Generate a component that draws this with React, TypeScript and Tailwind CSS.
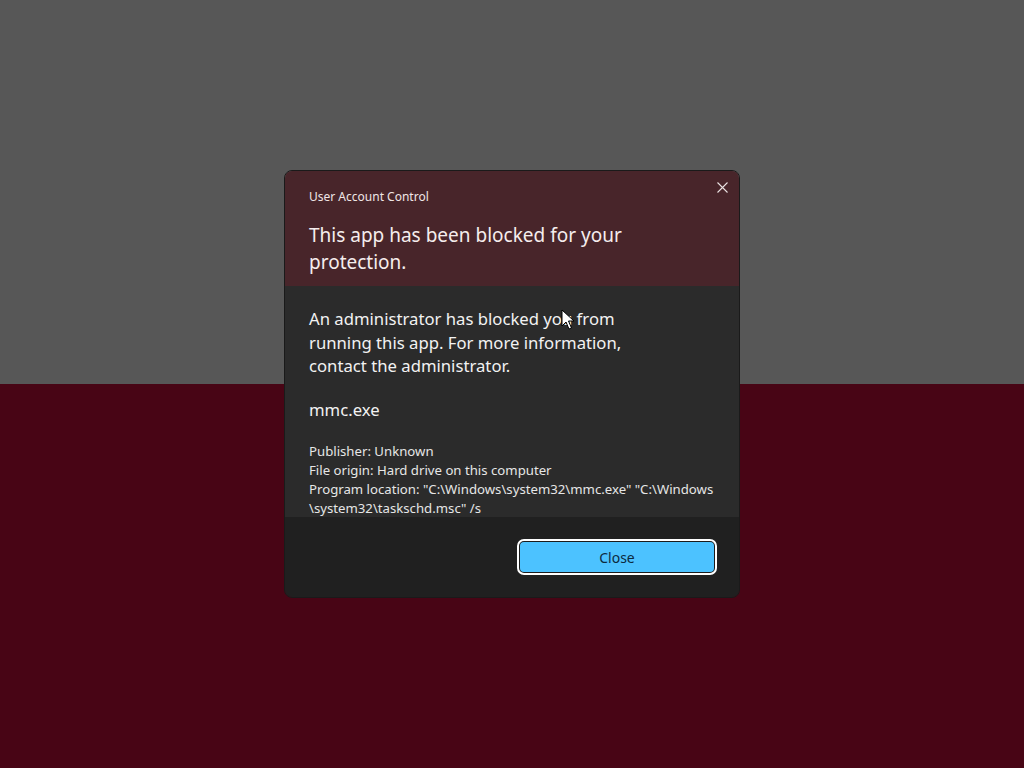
import React from 'react';

function Cursor() {
  return (
    <svg width="14" height="21" viewBox="0 0 14 21" className="absolute left-[561px] top-[309px]">
      <path d="M1 1 L1 17 L5 13 L8 20 L10.5 19 L7.5 12 L13 12 Z" fill="#ffffff" stroke="#000000" strokeWidth="1" strokeLinejoin="round" />
    </svg>
  );
}

export default function App() {
  return (
    <div className="relative w-[1024px] h-[768px] overflow-hidden font-['Noto_Sans',sans-serif]">
      {/* Backdrop halves */}
      <div className="flex flex-col h-full">
        <div className="h-[384px] bg-[#575757]" />
        <div className="flex-1 bg-[#480515]" />
      </div>

      {/* Dialog */}
      <div className="absolute inset-0 flex items-center justify-center">
        <div className="w-[456px] h-[428px] flex flex-col rounded-[8px] border border-[#1a1a1a] overflow-hidden">
          {/* Header */}
          <div className="relative bg-[#48252a] px-6 pt-[17px] pb-[10px]">
            <div className="text-[12px] leading-[18px] text-[#f0e6e6]">User Account Control</div>
            <div className="mt-[16px] text-[19px] leading-[27px] text-[#f5eded]">
              This app has been blocked for your
              <br />
              protection.
            </div>
            <button className="absolute right-[11px] top-[10px] w-[12px] h-[12px] flex items-center justify-center text-[#e8e0e0]">
              <svg width="11" height="11" viewBox="0 0 11 11">
                <path d="M0.5 0.5 L10.5 10.5 M10.5 0.5 L0.5 10.5" stroke="currentColor" strokeWidth="1.1" />
              </svg>
            </button>
          </div>

          {/* Body */}
          <div className="flex-1 bg-[#2b2b2b] px-6 pt-[21px] overflow-hidden">
            <p className="text-[16.7px] leading-[23.5px] text-[#f2f2f2]">
              An administrator has blocked you from
              <br />
              running this app. For more information,
              <br />
              contact the administrator.
            </p>
            <div className="mt-[20px] text-[16.7px] leading-[24px] text-[#f2f2f2]">mmc.exe</div>
            <div className="mt-[20px] text-[13.2px] leading-[19px] text-[#e6e6e6]">
              <div>Publisher: Unknown</div>
              <div>File origin: Hard drive on this computer</div>
              <div>Program location: "C:\Windows\system32\mmc.exe" "C:\Windows</div>
              <div>\system32\taskschd.msc" /s</div>
            </div>
          </div>

          {/* Footer */}
          <div className="h-[80px] bg-[#202020] flex items-center justify-end px-[22px]">
            <button className="w-[200px] h-[36px] rounded-[7px] border-2 border-white bg-[#1b1b1b] p-[1px]">
              <span className="flex items-center justify-center w-full h-full rounded-[4px] bg-[#4cc2ff] text-[14px] text-[#0c2a3e]">
                Close
              </span>
            </button>
          </div>
        </div>
      </div>

      <Cursor />
    </div>
  );
}
